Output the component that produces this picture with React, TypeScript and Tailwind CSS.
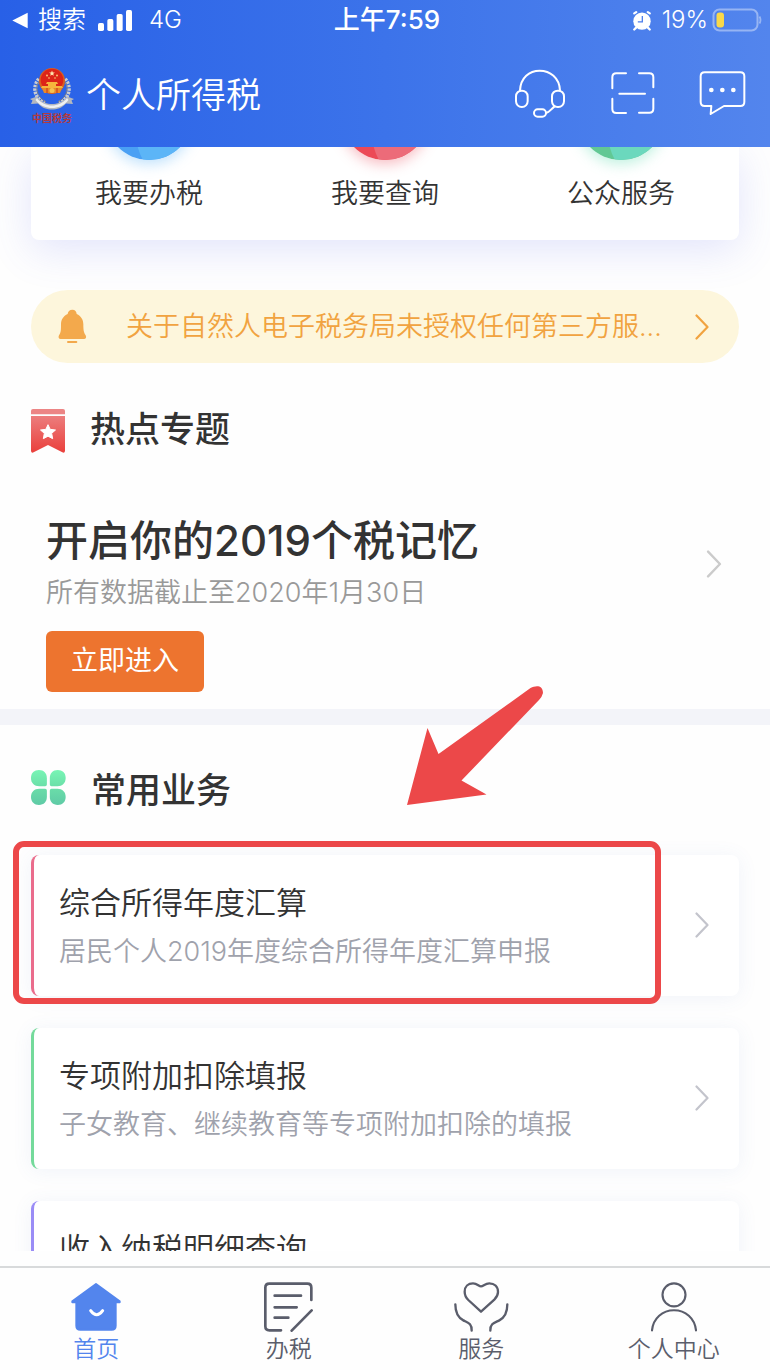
import React from "react";

const stroke = {
  fill: "none",
  stroke: "currentColor",
  strokeLinecap: "round" as const,
  strokeLinejoin: "round" as const,
};

function Chevron({ className }: { className: string }) {
  return (
    <svg viewBox="0 0 14 26" className={`shrink-0 ${className}`} aria-hidden="true">
      <path d="M1.5 1.5 12.5 13 1.5 24.5" {...stroke} strokeWidth="2.2" />
    </svg>
  );
}

function StatusBar() {
  return (
    <div className="grid h-10 grid-cols-[1fr_auto_1fr] items-center pr-2 pl-3 text-2xl leading-10">
      <div className="flex items-center">
        <svg viewBox="39 34 48 50" className="h-[17px] w-4" aria-hidden="true">
          <path d="M40 59 86 36V82Z" fill="#fff" />
        </svg>
        <span className="ml-[10px] font-[350]">搜索</span>
        <svg viewBox="294 24 102 63" className="ml-3 h-[21px] w-[34px]" fill="#fff" aria-hidden="true">
          <rect x="294" y="63" width="18" height="24" rx="5" />
          <rect x="322" y="51" width="18" height="36" rx="5" />
          <rect x="350" y="36" width="18" height="51" rx="5" />
          <rect x="378" y="24" width="18" height="63" rx="5" />
        </svg>
        <span className="ml-[17px] font-[350]">4G</span>
      </div>
      <div className="text-[26px] font-medium">上午7:59</div>
      <div className="flex items-center justify-end">
        <svg viewBox="731 22 62 64" className="h-[21px] w-5" aria-hidden="true">
          <circle cx="762" cy="56" r="27" fill="#fff" />
          <g {...stroke} stroke="#fff" strokeWidth="7">
            <path d="M738 32 744 28M786 32 780 28M743 77 738 82M781 77 786 82" />
          </g>
          <path d="M763 40V58H749" fill="none" stroke="#4a7cec" strokeWidth="4" />
        </svg>
        <span className="ml-[10px] font-[350]">19%</span>
        <svg viewBox="0 0 50 24" className="ml-1 h-6 w-[50px]" aria-hidden="true">
          <rect x="1.5" y="1.5" width="44" height="21" rx="6" fill="none" stroke="#fff" strokeOpacity=".4" strokeWidth="2" />
          <rect x="4.5" y="4.5" width="7.5" height="15" rx="3" fill="#f9d849" />
          <path d="M47.5 8.5q2 3.5 0 7" fill="none" stroke="#fff" strokeOpacity=".4" strokeWidth="1.8" />
        </svg>
      </div>
    </div>
  );
}

function Emblem() {
  return (
    <div className="flex w-11 flex-col items-center pt-2">
      <svg viewBox="0 0 44 43" className="h-[43px] w-11" aria-hidden="true">
        <g fill="none" stroke="#c9ccd2" strokeWidth="4" strokeDasharray="2.4 1">
          <path d="M9 12C2 20 5 32 15 36" />
          <path d="M35 12C42 20 39 32 29 36" />
        </g>
        <g fill="none" stroke="#6f7684" strokeWidth="1">
          <path d="M10 13C4 20 7 30 16 35" />
          <path d="M34 13C40 20 37 30 28 35" />
        </g>
        <circle cx="22" cy="14" r="13" fill="#d9601f" />
        <circle cx="22" cy="13" r="11.3" fill="#dc2418" />
        <path d="M22 3.4l.8 2 2.1.1-1.7 1.3.6 2L22 7.700l-1.800 1.100.6-2-1.700-1.300 2.100-.1Z" fill="#ffe9b0" />
        <g fill="#ffd27a">
          <circle cx="17" cy="8.500" r=".9" />
          <circle cx="27" cy="8.500" r=".9" />
          <circle cx="19" cy="11" r=".8" />
          <circle cx="25" cy="11" r=".8" />
        </g>
        <path d="M17 15h10l1 2h-2v2h6l1 2H11l1-2h6v-2h-2Z" fill="#f6b53c" />
        <path d="M12 21h20l-2 5H14Z" fill="#e8892b" />
        <path d="M17 21v5M27 21v5" stroke="#c8321a" strokeWidth="1" />
        <circle cx="22" cy="23.500" r="2.500" fill="#f4c352" />
        <path d="M0 32l7-2.500C12 36 17 37 22 37s10-1 15-7.500l7 2.500-2.500 1.500L43 37l-7-.5C32 41 27 42.500 22 42.500S12 41 8 36.500L1 37l1.500-3.500Z" fill="#b4b8bf" />
        <path d="M7 31c4 5.500 10 7.500 15 7.500S33 36.500 37 31l1.500 2C34 39 28 41 22 41S10 39 5.500 33Z" fill="#eef0f2" />
      </svg>
      <span className="text-[10px] leading-[17px] font-bold whitespace-nowrap text-[#b23a3e]">中国税务</span>
    </div>
  );
}

function Header() {
  return (
    <header className="shrink-0 bg-linear-to-r from-[#2860e7] via-[#3c73ea] via-50% to-[#5385ed] text-white">
      <StatusBar />
      <div className="flex h-[107px] items-center pr-6 pb-px pl-[30px]">
        <Emblem />
        <h1 className="ml-3 pt-1 text-[35px] leading-[50px] font-[350]">个人所得税</h1>
        <div className="ml-auto flex items-center gap-11">
          <button type="button" aria-label="客服">
            <svg viewBox="390 203 156 153" className="h-[51px] w-[52px]" {...stroke} strokeWidth="6" aria-hidden="true">
              <path d="M408 270C410 232 436 211 467 211S526 232 528 270" />
              <rect x="396" y="271" width="35" height="49" rx="17" />
              <rect x="504" y="271" width="36" height="49" rx="17" />
              <rect x="450" y="327" width="36" height="22" rx="11" />
              <path d="M486 338C496 337 502 325 512 318" />
            </svg>
          </button>
          <button type="button" aria-label="扫一扫">
            <svg viewBox="675 213 135 132" className="h-11 w-[45px]" {...stroke} strokeWidth="6" aria-hidden="true">
              <path d="M682 265V232q0-12 12-12h29M762 220h31q12 0 12 12v30M682 296v31q0 12 12 12h29M762 338h31q12 0 12-12v-30M703 281h77" />
            </svg>
          </button>
          <button type="button" aria-label="消息">
            <svg viewBox="942 213 141 138" className="h-[46px] w-[47px]" {...stroke} strokeWidth="6" aria-hidden="true">
              <path d="M959 220h107q12 0 12 12v77q0 12-12 12h-49l-40 24 2-24h-20q-12 0-12-12v-77q0-12 12-12Z" />
              <g fill="currentColor" stroke="none">
                <circle cx="979" cy="273" r="7" />
                <circle cx="1012" cy="273" r="7" />
                <circle cx="1045" cy="273" r="7" />
              </g>
            </svg>
          </button>
        </div>
      </div>
    </header>
  );
}

const shortcuts = [
  { label: "我要办税", dark: "#4aa0f4", light: "#5cb5f7", glow: "shadow-[0_4px_14px_#5cb5f766]" },
  { label: "我要查询", dark: "#ec4956", light: "#ec6b79", glow: "shadow-[0_4px_14px_#ec566466]" },
  { label: "公众服务", dark: "#62c894", light: "#6bd8bd", glow: "shadow-[0_4px_14px_#5fdcae66]" },
];

function Shortcuts() {
  return (
    <section className="grid grid-cols-3 rounded-b-lg bg-white pb-[26px] shadow-[0_10px_40px_#5b62f02b]">
      {shortcuts.map((s) => (
        <a key={s.label} href="#" className="flex flex-col items-center">
          <span className={`-mt-[75px] size-[88px] overflow-hidden rounded-full ${s.glow}`}>
            <svg viewBox="0 0 88 88" className="size-full" aria-hidden="true">
              <rect width="88" height="88" fill={s.dark} />
              <path d="M30 60Q32 78 38 88H88V40H34Z" fill={s.light} />
            </svg>
          </span>
          <span className="mt-[14px] text-[27px] leading-10 font-[350]">{s.label}</span>
        </a>
      ))}
    </section>
  );
}

function Notice() {
  return (
    <a href="#" className="mt-[50px] flex h-[73px] items-center rounded-full bg-[#fdf6dc] pr-[30px] pl-[27px] text-[#f1a340]">
      <svg viewBox="174 507 87 105" className="h-[35px] w-[29px] shrink-0" fill="#f3a94c" aria-hidden="true">
        <path d="M217 509c8 0 13 6 13 13 13 6 20 17 20 31 0 17 1 25 7 33 3 6 1 11-5 11h-70c-6 0-8-5-5-11 6-8 6-16 6-33 0-14 7-25 20-31 0-7 6-13 14-13Z" />
        <rect x="201" y="603" width="31" height="6" rx="3" />
      </svg>
      <span className="ml-[39px] min-w-0 flex-1 text-[27px] leading-10 font-[350] whitespace-nowrap">
        关于自然人电子税务局未授权任何第三方服...
      </span>
      <Chevron className="h-[26px] w-[14px]" />
    </a>
  );
}

function HotTopic() {
  return (
    <section className="mt-[41px] px-[31px] pb-[17px]">
      <div className="flex h-[54px] items-center">
        <svg viewBox="93 57 102 132" className="h-11 w-[34px]" aria-hidden="true">
          <defs>
            <linearGradient id="ribbon" x1="0" y1="0" x2="0" y2="1">
              <stop offset="0" stopColor="#ec7d7d" />
              <stop offset="1" stopColor="#ea403c" />
            </linearGradient>
          </defs>
          <path d="M93 73V63q0-6 6-6h90q6 0 6 6v10Z" fill="#ec8585" />
          <path d="M93 78H195V183q-1 7-8 4l-43-22-43 22q-7 3-8-4Z" fill="url(#ribbon)" />
          <path d="M144 104l6.500 14 16 2-11.500 10 3 16-14-7.500-14 7.500 3-16-11.500-10 16-2Z" fill="#fff" stroke="#fff" strokeWidth="3" strokeLinejoin="round" />
        </svg>
        <h2 className="mb-1 ml-[25px] text-[35px] leading-[50px] font-medium">热点专题</h2>
      </div>
      <div className="mt-[53px] flex items-center pr-[17px] pl-[15px]">
        <div className="flex-1">
          <h3 className="text-[42px] leading-[60px] font-medium">开启你的2019个税记忆</h3>
          <p className="text-[27px] leading-[44px] font-[350] text-[#999]">所有数据截止至2020年1月30日</p>
          <button type="button" className="mt-4 block h-[61px] w-[158px] rounded-md bg-[#ed742f] text-[27px] text-white">
            立即进入
          </button>
        </div>
        <Chevron className="mb-[76px] h-7 w-4 text-[#cbcbcb]" />
      </div>
    </section>
  );
}

const services = [
  { title: "综合所得年度汇算", note: "居民个人2019年度综合所得年度汇算申报", edge: "border-[#ea6c8c]", marked: true },
  { title: "专项附加扣除填报", note: "子女教育、继续教育等专项附加扣除的填报", edge: "border-[#74da9b]", marked: false },
  { title: "收入纳税明细查询", note: "", edge: "border-[#9a8cf6]", marked: false },
];

function Services() {
  return (
    <section className="relative px-[31px]">
      <svg viewBox="0 0 138 120" className="absolute -top-10 left-[406px] h-[120px] w-[138px]" aria-hidden="true">
        <path
          d="M1 120 21.500 43 32.500 69 124.500 3C130 0 137 0 137 8Q136 12 133 15L55.500 95.500 80.500 109.500Z"
          fill="#ec4849"
        />
      </svg>
      <div className="flex h-32 items-center">
        <svg viewBox="93 60 106 106" className="mb-[3px] size-[35px]" aria-hidden="true">
          <defs>
            <linearGradient id="clover" gradientUnits="userSpaceOnUse" x1="0" y1="60" x2="0" y2="166">
              <stop offset="0" stopColor="#78f5b5" />
              <stop offset=".45" stopColor="#6ce0a9" />
              <stop offset="1" stopColor="#5fcaa6" />
            </linearGradient>
          </defs>
          <g fill="url(#clover)">
            <path d="M117 60c15 0 24 10 24 24v20q0 5-5 5h-18c-15 0-25-10-25-25s10-24 24-24Z" />
            <path d="M174 60c-15 0-24 10-24 24v20q0 5 5 5h18c15 0 25-10 25-25s-10-24-24-24Z" />
            <path d="M117 166c15 0 24-10 24-24v-20q0-5-5-5h-18c-15 0-25 10-25 25s10 24 24 24Z" />
            <path d="M174 166c-15 0-24-10-24-24v-20q0-5 5-5h18c15 0 25 10 25 25s-10 24-24 24Z" />
          </g>
        </svg>
        <h2 className="ml-[25px] pt-0.5 text-[35px] leading-[50px] font-medium">常用业务</h2>
      </div>
      <div className="mt-0.5 flex flex-col gap-8">
        {services.map((s) => (
          <div key={s.title} className="relative">
            <a
              href="#"
              className={`flex h-[141px] items-center rounded-lg border-l-3 bg-white pr-[30px] pl-[25px] shadow-[0_2px_20px_#5078c014] ${s.edge}`}
            >
              <div className="h-[97px] flex-1 pt-[3px]">
                <h3 className="text-[31px] leading-[45px] font-[350]">{s.title}</h3>
                <p className="mt-[5px] text-[27px] leading-[44px] font-[350] text-[#9fa2ac]">{s.note}</p>
              </div>
              <Chevron className="mb-0.5 h-[26px] w-[14px] text-[#c3c4cc]" />
            </a>
            {s.marked && (
              <div className="pointer-events-none absolute -top-[14px] right-[78px] -bottom-2 -left-[18px] rounded-[11px] border-6 border-[#ec4849]" />
            )}
          </div>
        ))}
      </div>
    </section>
  );
}

const tabs = [
  {
    label: "首页",
    active: true,
    icon: (
      <svg viewBox="207 96 150 150" className="size-[50px]" aria-hidden="true">
        <path
          d="M282 102 353 154V157H341V227q0 12-12 12H235q-12 0-12-12V157H211V154Z"
          fill="#5385ed"
          stroke="#5385ed"
          strokeWidth="6"
          strokeLinejoin="round"
        />
        <path d="M266 182Q284 207 302 182" fill="none" stroke="#fff" strokeWidth="9" strokeLinecap="round" />
      </svg>
    ),
  },
  {
    label: "办税",
    active: false,
    icon: (
      <svg viewBox="788 95 153 150" className="h-[50px] w-[51px]" {...stroke} strokeWidth="8" aria-hidden="true">
        <path d="M933 149V112q0-12-12-12H807q-12 0-12 12V228q0 12 12 12h35M934 180l-60 61M823 136h79M823 171h66M823 202h41" />
      </svg>
    ),
  },
  {
    label: "服务",
    active: false,
    icon: (
      <svg viewBox="211 303 168 153" className="h-[51px] w-14" {...stroke} strokeWidth="7" aria-hidden="true">
        <path d="M295 395 257 360C249 352 246 345 246 335C246 319 257 310 271 310C284 310 288 319 295 319S307 310 320 310C335 310 346 319 346 336C346 346 342 352 335 359Z" />
        <path d="M218 373C218 398 228 414 242 421C256 428 268 430 267 452M374 373C374 398 364 414 350 421C336 428 322 430 323 452" />
      </svg>
    ),
  },
  {
    label: "个人中心",
    active: false,
    icon: (
      <svg viewBox="797 303 146 153" className="h-[51px] w-12" {...stroke} strokeWidth="6.500" aria-hidden="true">
        <circle cx="870" cy="344" r="35" />
        <path d="M803 452C807 415 835 391 870 391S933 415 937 452" />
      </svg>
    ),
  },
];

export default function App() {
  return (
    <div className="flex h-screen flex-col bg-[#fefefe] font-['Inter','Noto_Sans_CJK_SC',sans-serif] text-[#333]">
      <Header />
      <main className="min-h-0 flex-1 overflow-hidden">
        <div className="px-[31px]">
          <Shortcuts />
          <Notice />
        </div>
        <HotTopic />
        <div className="h-4 bg-[#f3f4f9]" />
        <Services />
      </main>
      <nav className="mt-[15px] grid shrink-0 grid-cols-4 border-t-2 border-[#d8dadb] pt-[13px] pb-1">
        {tabs.map((t) => (
          <a
            key={t.label}
            href="#"
            className={`flex flex-col items-center text-[23px] leading-[34px] font-[350] ${t.active ? "text-[#5385ed]" : "text-[#5a5d6b]"}`}
          >
            <span className="flex h-[51px] items-center">{t.icon}</span>
            {t.label}
          </a>
        ))}
      </nav>
    </div>
  );
}
